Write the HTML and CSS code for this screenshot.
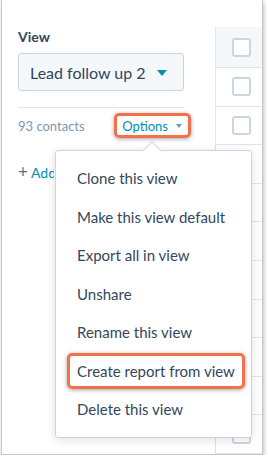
FILE: index.html
```html
<!DOCTYPE html>
<html lang="en">
<head>
    <meta charset="UTF-8">
    <meta name="viewport" content="width=device-width, initial-scale=1.0">
    <title>Contacts view options</title>
    <link rel="stylesheet" href="styles.css">
</head>
<body>

    <div class="frame">
        <!-- Left sidebar with the view selector -->
        <div class="sidebar">
            <div class="view-label">View</div>
            <div class="view-select">
                <span>Lead follow up 2</span>
                <span class="caret"></span>
            </div>
            <div class="count-row">
                <span class="count">93 contacts</span>
                <span class="options">Options <span class="caret-small"></span></span>
            </div>
            <div class="add-view"><span class="plus">+</span> Add view</div>
        </div>

        <!-- Table column with checkboxes -->
        <div class="table-col">
            <div class="cell head"><span class="checkbox"></span></div>
            <div class="cell"><span class="checkbox"></span></div>
            <div class="cell"><span class="checkbox"></span></div>
            <div class="cell"><span class="checkbox"></span></div>
            <div class="cell"><span class="checkbox"></span></div>
            <div class="cell"><span class="checkbox"></span></div>
            <div class="cell"><span class="checkbox"></span></div>
            <div class="cell"><span class="checkbox"></span></div>
            <div class="cell"><span class="checkbox"></span></div>
            <div class="cell"><span class="checkbox"></span></div>
            <div class="cell"><span class="checkbox"></span></div>
        </div>

        <!-- Options dropdown -->
        <div class="menu">
            <span class="pointer"></span>
            <div class="menu-item">Clone this view</div>
            <div class="menu-item">Make this view default</div>
            <div class="menu-item">Export all in view</div>
            <div class="menu-item">Unshare</div>
            <div class="menu-item">Rename this view</div>
            <div class="menu-item marked">Create report from view</div>
            <div class="menu-item">Delete this view</div>
        </div>
    </div>

</body>
</html>
```

FILE: styles.css
```css
/* Page */
body {
    margin: 0;
    background-color: #ffffff;
    font-family: 'Lato', 'Liberation Sans', sans-serif;
    color: #33475b;
}

/* Screenshot frame */
.frame {
    position: relative;
    display: flex;
    width: 260px;
    height: 454px;
    margin-left: 1px;
    border: 1px solid #c8c8c8;
    border-top: none;
    box-shadow: 1px 2px 4px rgba(0, 0, 0, 0.25);
    background-color: #ffffff;
    overflow: hidden;
}

/* Sidebar */
.sidebar {
    width: 213px;
    padding: 30px 0 0 16px;
    box-sizing: border-box;
}

.view-label {
    font-size: 14px;
    font-weight: 700;
    line-height: 14px;
    margin-bottom: 9px;
}

.view-select {
    display: flex;
    align-items: center;
    justify-content: space-between;
    width: 166px;
    height: 38px;
    box-sizing: border-box;
    padding: 0 16px 0 11px;
    background-color: #f5f8fa;
    border: 1px solid #cbd6e2;
    border-radius: 3px;
    font-size: 16px;
}

.caret {
    width: 0;
    height: 0;
    border-left: 5.5px solid transparent;
    border-right: 5.5px solid transparent;
    border-top: 6px solid #0091ae;
    margin-top: 1px;
}

.count-row {
    display: flex;
    align-items: center;
    justify-content: space-between;
    width: 166px;
    margin-top: 16px;
    padding-top: 5px;
    border-top: 1px solid #dfe3eb;
}

.count {
    font-size: 13px;
    color: #7c98b6;
}

.options {
    display: flex;
    align-items: center;
    gap: 8px;
    height: 19px;
    margin-right: -7px;
    padding: 0 6px 0 5px;
    border: 3px solid #f2714b;
    border-radius: 5px;
    box-shadow: 0 1px 4px rgba(0, 0, 0, 0.35);
    font-size: 13px;
    color: #0091ae;
}

.caret-small {
    width: 0;
    height: 0;
    border-left: 3.5px solid transparent;
    border-right: 3.5px solid transparent;
    border-top: 4px solid #7c98b6;
}

/* Clipped where the open menu covers it */
.add-view {
    width: 36px;
    margin-top: 23px;
    overflow: hidden;
    white-space: nowrap;
    font-size: 14px;
    color: #0091ae;
}

.plus {
    font-size: 17px;
    color: #516f90;
}

/* Table column */
.table-col {
    flex: 1;
    margin-top: 27px;
    border-left: 1px solid #dfe3eb;
}

.cell {
    height: 38.6px;
    box-sizing: border-box;
    border-bottom: 1px solid #dfe3eb;
    display: flex;
    align-items: center;
    padding-left: 16px;
}

.cell.head {
    height: 41px;
    background-color: #f5f8fa;
}

.checkbox {
    width: 19px;
    height: 19px;
    box-sizing: border-box;
    border: 2px solid #cbd6e2;
    border-radius: 3px;
    background-color: #ffffff;
}

/* Dropdown menu */
.menu {
    position: absolute;
    left: 53px;
    top: 150px;
    width: 197px;
    padding: 8px 0;
    box-sizing: border-box;
    background-color: #ffffff;
    border: 1px solid #cbd6e2;
    border-radius: 3px;
    box-shadow: 0 2px 10px rgba(0, 0, 0, 0.12);
}

.pointer {
    position: absolute;
    left: 89px;
    top: -7px;
    width: 13px;
    height: 13px;
    background-color: #ffffff;
    border-top: 1px solid #cbd6e2;
    border-left: 1px solid #cbd6e2;
    transform: rotate(45deg);
}

.menu-item {
    height: 38.5px;
    display: flex;
    align-items: center;
    padding-left: 21px;
    font-size: 15px;
}

.menu-item.marked {
    height: 36px;
    margin: 1.25px 6px 1.25px 11px;
    padding-left: 7px;
    border: 3px solid #f2714b;
    border-radius: 5px;
    box-shadow: 0 1px 4px rgba(0, 0, 0, 0.35);
    box-sizing: border-box;
}
```
